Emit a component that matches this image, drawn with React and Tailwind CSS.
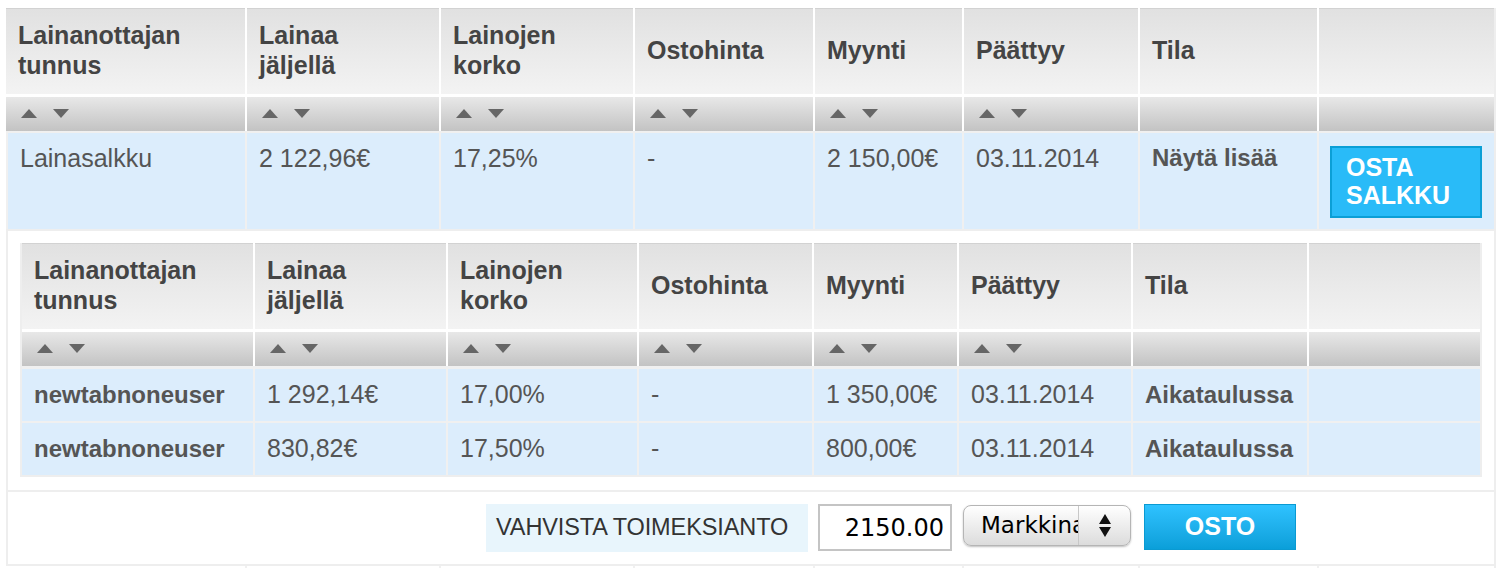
const outerCols =
  "grid grid-cols-[239px_192px_192px_178px_147px_174px_177px_175px] gap-x-[2px]";
const innerCols =
  "grid grid-cols-[231px_191px_189px_173px_143px_172px_174px_171px] gap-x-[2px]";

const heads = [
  ["Lainanottajan", "tunnus"],
  ["Lainaa", "jäljellä"],
  ["Lainojen", "korko"],
  ["Ostohinta"],
  ["Myynti"],
  ["Päättyy"],
  ["Tila"],
  [],
];

const sortable = [true, true, true, true, true, true, false, false];

function SortArrows() {
  return (
    <div className="flex items-center gap-[16px]">
      <svg width="16" height="9" viewBox="0 0 16 9">
        <polygon points="0,9 8,0 16,9" fill="#666" />
      </svg>
      <svg width="16" height="9" viewBox="0 0 16 9">
        <polygon points="0,0 16,0 8,9" fill="#666" />
      </svg>
    </div>
  );
}

function HeaderRow({ cols }) {
  return (
    <>
      <div className={`${cols} bg-white`}>
        {heads.map((h, i) => (
          <div
            key={i}
            className="h-[86px] border-t border-[#d2d2d2] bg-gradient-to-b from-[#e1e1e1] to-[#f3f3f3] flex flex-col justify-center pb-[4px] pl-[12px] text-[25px] leading-[30px] font-bold text-[#444]">
            {h.map(line => (
              <span key={line}>{line}</span>
            ))}
          </div>
        ))}
      </div>
      <div className={`${cols} bg-white pt-[3px]`}>
        {sortable.map((s, i) => (
          <div
            key={i}
            className="h-[34px] bg-gradient-to-b from-[#e8e8e8] to-[#c3c3c3] flex items-center pb-[2px] pl-[15px]">
            {s && <SortArrows />}
          </div>
        ))}
      </div>
    </>
  );
}

const loans = [
  ["newtabnoneuser", "1 292,14€", "17,00%", "-", "1 350,00€", "03.11.2014", "Aikataulussa"],
  ["newtabnoneuser", "830,82€", "17,50%", "-", "800,00€", "03.11.2014", "Aikataulussa"],
];

function App() {
  return (
    <div className="w-[1502px] h-[568px] overflow-hidden bg-white font-['Liberation_Sans',Arial,sans-serif]">
      <div className="ml-[6px] mt-[8px] w-[1490px] border-r-2 border-[#eeeeee]">
        <HeaderRow cols={outerCols} />
        <div className={`${outerCols} bg-[#f0f0f0] pt-[2px]`}>
          {[
            "Lainasalkku",
            "2 122,96€",
            "17,25%",
            "-",
            "2 150,00€",
            "03.11.2014",
          ].map((v, i) => (
            <div
              key={i}
              className={`h-[96px] bg-[#dcedfc] pt-[11px] pl-[12px] text-[25px] leading-[28px] text-[#555] ${
                i === 0 ? "border-l-2 border-[#f0f0f0] pl-[11px]" : ""
              }`}>
              {v}
            </div>
          ))}
          <div className="h-[96px] bg-[#dcedfc] pt-[11px] pl-[12px] text-[24px] leading-[28px] font-bold text-[#555]">
            Näytä lisää
          </div>
          <div className="h-[96px] bg-[#dcedfc] pt-[13px] pl-[11px]">
            <div className="w-[152px] h-[72px] border-2 border-[#0b9fd6] bg-[#29bbf8] pt-[5px] pl-[14px] text-[25px] leading-[28px] font-bold text-white">
              OSTA
              <br />
              SALKKU
            </div>
          </div>
        </div>
        <div className="border-t-2 border-l-2 border-[#eeeeee] bg-white pt-[12px] pb-[13px] pl-[12px]">
          <div className="w-[1462px] border-l-2 border-r-2 border-b-2 border-[#eeeeee]">
            <HeaderRow cols={innerCols} />
            <div className="bg-[#f0f0f0] pt-[3px] flex flex-col gap-y-[2px]">
              {loans.map((row, r) => (
                <div key={r} className={innerCols}>
                  {row.map((v, i) => (
                    <div
                      key={i}
                      className={`h-[52px] bg-[#dcedfc] flex items-center pl-[12px] text-[#555] ${
                        i === 0 || i === 6 ? "font-bold text-[24px]" : "text-[25px]"
                      }`}>
                      {v}
                    </div>
                  ))}
                  <div className="h-[52px] bg-[#dcedfc]" />
                </div>
              ))}
            </div>
          </div>
        </div>
        <div className="border-t-2 border-l-2 border-b-2 border-[#eeeeee] h-[76px] pt-[12px] flex items-start">
          <div className="ml-[478px] w-[322px] h-[48px] bg-[#e8f5fc] flex items-center pl-[10px] whitespace-nowrap text-[23.5px] tracking-[-0.1px] text-[#333]">
            VAHVISTA TOIMEKSIANTO
          </div>
          <div className="ml-[10px] w-[134px] h-[47px] border-2 border-[#c4c4c4] flex items-center justify-end pr-[6px] font-['DejaVu_Sans',sans-serif] text-[24px] text-black">
            2150.00
          </div>
          <div className="ml-[11px] mt-[1px] w-[168px] h-[41px] rounded-[8px] border border-[#b5b5b5] bg-gradient-to-b from-[#ffffff] to-[#dcdcdc] shadow-[0_1px_2px_rgba(0,0,0,0.25)] flex items-center overflow-hidden">
            <div className="w-[114px] pl-[17px] overflow-hidden whitespace-nowrap font-['DejaVu_Sans',sans-serif] text-[23px] text-black">
              Markkina
            </div>
            <div className="h-full border-l border-[#c8c8c8] flex-1 flex flex-col items-center justify-center gap-[3px]">
              <svg width="12" height="10" viewBox="0 0 12 10">
                <polygon points="0,10 6,0 12,10" fill="#111" />
              </svg>
              <svg width="12" height="10" viewBox="0 0 12 10">
                <polygon points="0,0 12,0 6,10" fill="#111" />
              </svg>
            </div>
          </div>
          <div className="ml-[13px] w-[152px] h-[46px] border border-[#0a9ad2] bg-gradient-to-b from-[#2ec2ff] to-[#0a9fd9] flex items-center justify-center text-[25px] font-bold text-white">
            OSTO
          </div>
        </div>
        <div className={`${outerCols} bg-[#f0f0f0] h-[6px]`}>
          {heads.map((_, i) => (
            <div key={i} className="bg-white" />
          ))}
        </div>
      </div>
    </div>
  );
}

export default App;
